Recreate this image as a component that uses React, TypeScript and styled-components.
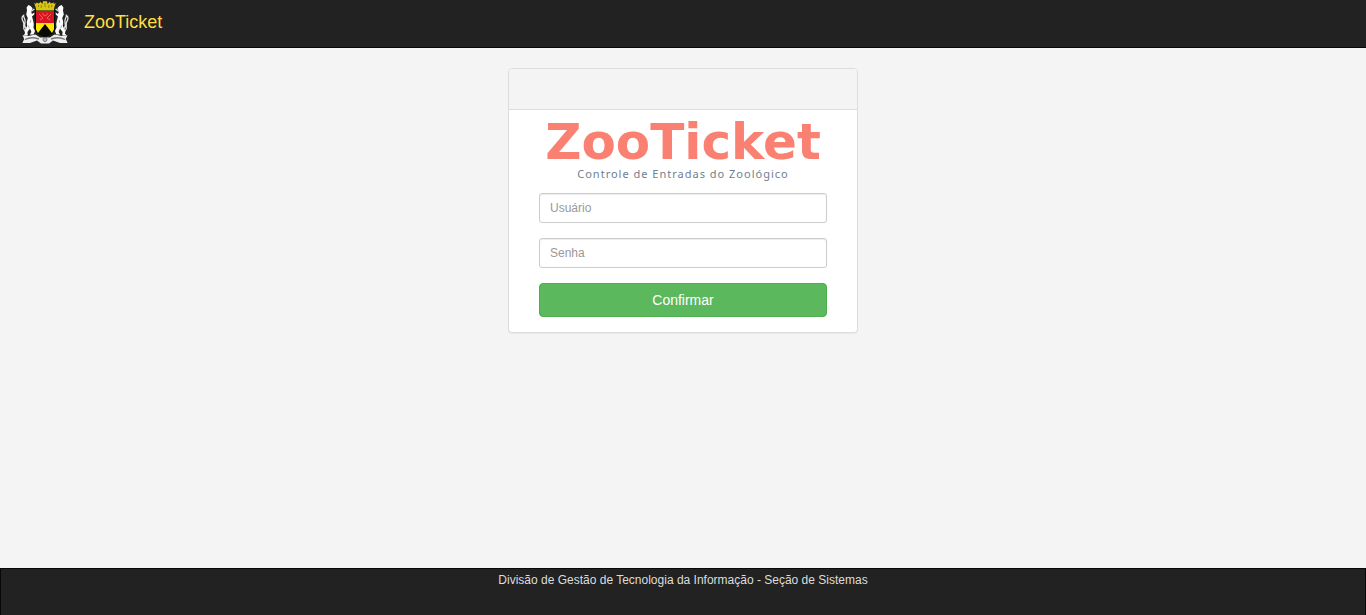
import React from "react";
import styled, { createGlobalStyle } from "styled-components";

const GlobalStyle = createGlobalStyle`
  *, *::before, *::after { box-sizing: border-box; }
  body {
    margin: 0;
    background: #f4f4f4;
    color: #333;
    font-family: "Liberation Sans", Arial, sans-serif;
    font-size: 12px;
    line-height: 17px;
  }
`;

const Page = styled.div`
  display: flex;
  flex-direction: column;
  min-height: 100vh;
`;

const Navbar = styled.header`
  display: flex;
  align-items: flex-start;
  height: 48px;
  padding: 0 20px;
  background: #222;
  border-bottom: 1px solid #080808;
`;

const Brand = styled.a`
  display: flex;
  gap: 14px;
  color: #fd4;
  font-size: 18px;
  line-height: 44px;
  text-decoration: none;
`;

const CrestArt = styled.svg`
  display: block;
  width: 50px;
  height: 46px;
`;

const Main = styled.main`
  flex: 1;
  padding: 20px 16px;
`;

const Panel = styled.section`
  width: 100%;
  max-width: 350px;
  margin: 0 auto;
  background: #fff;
  border: 1px solid #ddd;
  border-radius: 4px;
  box-shadow: 0 1px 1px rgba(0, 0, 0, 0.05);
`;

const PanelHeading = styled.div`
  height: 41px;
  background: #f4f4f4;
  border-bottom: 1px solid #ddd;
  border-radius: 3px 3px 0 0;
`;

const PanelBody = styled.div`
  padding: 7px 30px 15px;
`;

const Title = styled.h1`
  margin: 0;
  color: salmon;
  font-family: Verdana, "DejaVu Sans", sans-serif;
  font-size: 50px;
  font-weight: bold;
  line-height: 50px;
  text-align: center;
  white-space: nowrap;
`;

const Subtitle = styled.p`
  margin: 0 0 12px;
  color: slategray;
  font-family: Verdana, "Noto Sans", sans-serif;
  font-size: 11px;
  letter-spacing: 1px;
  line-height: 14px;
  text-align: center;
`;

const Form = styled.form`
  display: flex;
  flex-direction: column;
  gap: 15px;
`;

const Field = styled.input`
  width: 100%;
  height: 30px;
  padding: 5px 10px;
  background: #fff;
  border: 1px solid #ccc;
  border-radius: 3px;
  box-shadow: inset 0 1px 1px rgba(0, 0, 0, 0.075);
  color: #555;
  font: 12px/18px "Liberation Sans", Arial, sans-serif;

  &::placeholder {
    color: #999;
    opacity: 1;
  }

  &:focus {
    border-color: #66afe9;
    outline: 0;
  }
`;

const SubmitButton = styled.button`
  width: 100%;
  height: 34px;
  padding: 6px 12px;
  background: #5cb85c;
  border: 1px solid #4cae4c;
  border-radius: 4px;
  color: #fff;
  cursor: pointer;
  font: 14px/20px "Liberation Sans", Arial, sans-serif;

  &:hover {
    background: #449d44;
  }
`;

const Footer = styled.footer`
  height: 47px;
  padding-top: 3px;
  background: #222;
  border: 1px solid #080808;
  border-bottom: 0;
  color: #ddd;
  text-align: center;
`;

function Supporter() {
  return (
    <>
      <path
        d="M6.6 7.4L8.4 5L10.6 6L12.6 8.2L11.8 10L10.8 11L12 14L14.4 12.6L14.2 14.6L12 16.4L13 20L13.8 24L13.4 27.6L15 31L13.6 34.6H9.8L11.4 32L10 28.6L7.4 32L7.8 35.6H3.4L5 33.6L4.6 30.4L7.2 26L6.8 22L7.8 18L6.2 14.5L7 10.4Z"
        fill="#fff"
      />
      <path
        d="M5.2 31C1.8 28 5 25 3.4 22C1.6 19.5 1.4 16.8 3.6 15.4C3.4 18 6 19.4 5 22.4C4.4 25 4.2 27 6.4 29M11 11.4L14.4 9"
        fill="none"
        stroke="#e4e4e4"
        strokeWidth="1.3"
      />
      <path
        d="M11 20L10 23M8.4 25.4L9.2 28"
        fill="none"
        stroke="#888"
        strokeWidth="0.7"
      />
    </>
  );
}

function Crest() {
  return (
    <CrestArt viewBox="0 0 50 46" aria-hidden="true">
      <Supporter />
      <g transform="translate(50 0) scale(-1 1)">
        <Supporter />
      </g>
      <path
        d="M15 10H35V29C35 32 32.5 35 25 37C17.5 35 15 32 15 29Z"
        fill="#080808"
      />
      <path d="M16 11H34V23H16Z" fill="#d91521" />
      <path d="M16 23H34V29.5L32 33L25 24L18 33L16 29.5Z" fill="#fbe800" />
      <path
        d="M19 14L23 18L20 20M31 14L27 18L30 20M22 13.5L25 16L28 13.5"
        fill="none"
        stroke="#e8706c"
        strokeWidth="0.9"
      />
      <path
        d="M14.2 3L16.2 4V2.4L19 3.4L20.4 1.8L22.4 4L23 1.2H27L27.6 4L29.6 1.8L31 3.4L33.8 2.4V4L35.8 3L34 8.6V10.6H16V8.6Z"
        fill="#d6c516"
      />
      <path
        d="M18.4 5V7M21.2 5V8M25 3V7M28.8 5V8M31.6 5V7"
        stroke="#827507"
        strokeWidth="0.8"
      />
      <path
        d="M2.5 35.2L8 36L15.5 34.4L20 37.4H30L34.5 34.4L42 36L47.5 35.2L45.8 39L47.6 43H40L33 40.5L29 43.6H21L17 40.5L10 43H2.4L4.2 39Z"
        fill="#eee"
      />
      <path
        d="M5 39.5C9 37.4 14 37.2 19 39M31 39C36 37.2 41 37.4 45 39.5"
        fill="none"
        stroke="#777"
        strokeWidth="1.4"
      />
      <circle cx="25" cy="39.6" r="2" fill="#bbb" stroke="#666" strokeWidth="0.8" />
    </CrestArt>
  );
}

export default function App() {
  return (
    <Page>
      <GlobalStyle />
      <Navbar>
        <Brand href="#">
          <Crest />
          ZooTicket
        </Brand>
      </Navbar>
      <Main>
        <Panel>
          <PanelHeading />
          <PanelBody>
            <Title>ZooTicket</Title>
            <Subtitle>Controle de Entradas do Zoológico</Subtitle>
            <Form onSubmit={(event) => event.preventDefault()}>
              <Field type="text" name="usuario" placeholder="Usuário" aria-label="Usuário" />
              <Field type="password" name="senha" placeholder="Senha" aria-label="Senha" />
              <SubmitButton type="submit">Confirmar</SubmitButton>
            </Form>
          </PanelBody>
        </Panel>
      </Main>
      <Footer>Divisão de Gestão de Tecnologia da Informação - Seção de Sistemas</Footer>
    </Page>
  );
}
